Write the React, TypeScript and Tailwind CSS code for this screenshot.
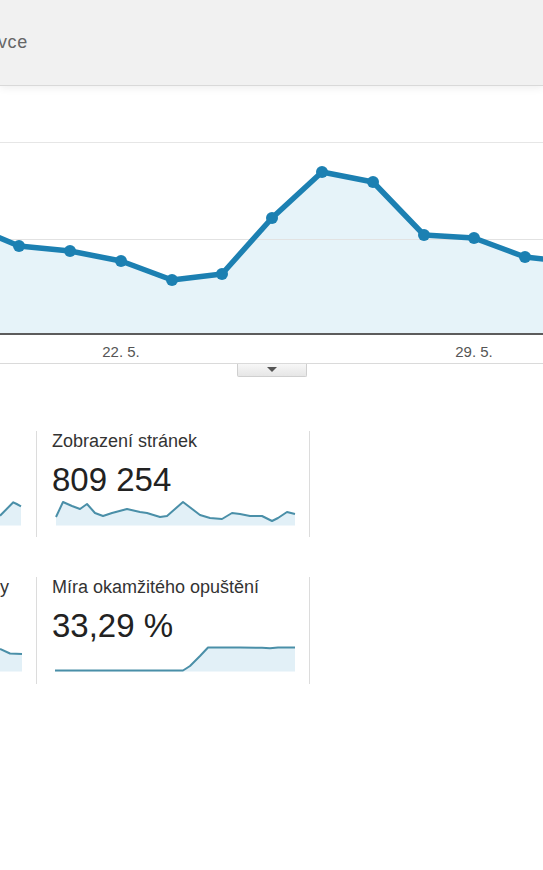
import React from "react";

const LINE = "#1c80b2";
const FILL = "#e6f3f9";
const SPARK = "#4a8fa8";
const SPARK_FILL = "#e2f0f7";

const mainPts: [number, number][] = [
  [-31.6, 94.7],
  [19, 116],
  [70, 121],
  [121, 131],
  [172, 150],
  [222, 144],
  [272, 88],
  [322, 42],
  [373, 52],
  [424, 105],
  [474, 108],
  [525, 127],
  [575.6, 132.6],
];

function Sparkline({ pts, width, bottom = 27.5 }: { pts: [number, number][]; width: number; bottom?: number }) {
  const line = pts.map((p) => p.join(",")).join(" ");
  const area = `${pts[0][0]},${bottom} ${line} ${pts[pts.length - 1][0]},${bottom}`;
  return (
    <svg width={width} height={28} className="block">
      <polygon points={area} fill={SPARK_FILL} />
      <polyline points={line} fill="none" stroke={SPARK} strokeWidth={2} strokeLinejoin="round" />
    </svg>
  );
}

const row1 = [
  [56, 19], [63, 4], [72, 8], [80, 11], [87, 6], [95, 15], [103, 18], [112, 15], [127, 11], [140, 14],
  [147, 15], [160, 19], [167, 18], [183, 4], [200, 17], [210, 20], [222, 21], [232, 15], [240, 16],
  [250, 18], [262, 18], [272, 23], [278, 20], [287, 14], [295, 16],
].map(([x, y]) => [x - 52, y] as [number, number]);

const row2 = [
  [55, 26.5], [183, 26.5], [190, 22], [200, 12], [208, 3.5], [240, 3.5], [262, 3.8], [270, 4.3], [278, 3.6], [295, 3.6],
].map(([x, y]) => [x - 52, y] as [number, number]);

function Card({ title, value, pts }: { title: string; value: string; pts: [number, number][] }) {
  return (
    <div className="w-[273px] border-r border-[#dcdcdc] pl-[15px]">
      <div className="text-[18px] leading-[21px] text-[#333]">{title}</div>
      <div className="mt-[10px] text-[33px] leading-[36px] text-[#222]">{value}</div>
      <Sparkline pts={pts} width={246} />
    </div>
  );
}

export default function App() {
  const line = mainPts.map((p) => p.join(",")).join(" ");
  const area = `${mainPts[0][0]},203 ${line} ${mainPts[mainPts.length - 1][0]},203`;
  return (
    <div className="w-[543px] h-[870px] overflow-hidden bg-white font-['Liberation_Sans',Arial,sans-serif]">
      <div className="h-[86px] bg-[#f1f1f1] border-b border-[#d9d9d9] shadow-[0_2px_8px_rgba(0,0,0,0.07)] pt-[32px]">
        <div className="-ml-[2px] text-[18px] leading-[20px] text-[#666] tracking-[0.6px]">vce</div>
      </div>

      <svg width={543} height={233} className="block mt-[44px]">
        <line x1={0} x2={543} y1={12.5} y2={12.5} stroke="#e6e6e6" />
        <polygon points={area} fill={FILL} />
        <line x1={0} x2={543} y1={109.5} y2={109.5} stroke="#e2e2e2" />
        <polyline points={line} fill="none" stroke={LINE} strokeWidth={5.5} strokeLinejoin="round" />
        {mainPts.map(([x, y], i) => (
          <circle key={i} cx={x} cy={y} r={6} fill={LINE} />
        ))}
        <rect x={0} y={203} width={543} height={2} fill="#5c5c5c" />
        <text x={121} y={227} textAnchor="middle" fontSize={15} fill="#555" fontFamily="Liberation Sans, Arial, sans-serif">
          22. 5.
        </text>
        <text x={474} y={227} textAnchor="middle" fontSize={15} fill="#555" fontFamily="Liberation Sans, Arial, sans-serif">
          29. 5.
        </text>
      </svg>

      <div className="border-t border-[#dadada] flex justify-center">
        <div className="w-[70px] h-[13px] border border-t-0 border-[#cfcfcf] rounded-b-[2px] bg-gradient-to-b from-[#f7f7f7] to-[#e6e6e6] flex justify-center pt-[3px]">
          <svg width={10} height={5} className="block">
            <polygon points="0,0 10,0 5,5" fill="#555" />
          </svg>
        </div>
      </div>

      <div className="mt-[54px] flex flex-col gap-[40px]">
        <div className="flex h-[106px]">
          <div className="w-[37px] border-r border-[#dcdcdc] overflow-hidden">
            <div className="h-[21px]" />
            <div className="h-[46px]" />
            <Sparkline pts={[[0, 17.7], [13.3, 4.3], [16.7, 6], [21, 8.3]]} width={36} />
          </div>
          <Card title="Zobrazení stránek" value="809 254" pts={row1} />
        </div>
        <div className="flex h-[107px]">
          <div className="w-[37px] border-r border-[#dcdcdc] overflow-hidden">
            <div className="h-[21px] text-[18px] leading-[21px] text-[#333]">y</div>
            <div className="h-[46px]" />
            <Sparkline pts={[[0, 5], [10, 9.5], [22, 10]]} width={36} />
          </div>
          <Card title="Míra okamžitého opuštění" value="33,29 %" pts={row2} />
        </div>
      </div>
    </div>
  );
}
